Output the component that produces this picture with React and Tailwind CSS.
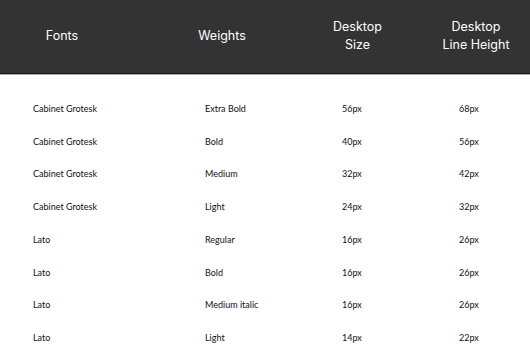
const rows = [
  ['Cabinet Grotesk', 'Extra Bold', '56px', '68px'],
  ['Cabinet Grotesk', 'Bold', '40px', '56px'],
  ['Cabinet Grotesk', 'Medium', '32px', '42px'],
  ['Cabinet Grotesk', 'Light', '24px', '32px'],
  ['Lato', 'Regular', '16px', '26px'],
  ['Lato', 'Bold', '16px', '26px'],
  ['Lato', 'Medium italic', '16px', '26px'],
  ['Lato', 'Light', '14px', '22px'],
];

export default function App() {
  return (
    <div className="h-[363px] w-[530px] overflow-hidden bg-white">
      <div className="flex h-[73px] items-center bg-[#333333] pb-[2px] text-[12.5px] leading-[18px] text-white [font-family:Inter,'Liberation_Sans',sans-serif]">
        <div className="ml-[22px] w-[80px] text-center">Fonts</div>
        <div className="ml-[80px] w-[80px] text-center">Weights</div>
        <div className="ml-[55px] w-[81px] text-center">
          Desktop
          <br />
          Size
        </div>
        <div className="ml-[38px] w-[80px] text-center">
          Desktop
          <br />
          Line Height
        </div>
      </div>
      <div className="h-px bg-[#151515]" />
      <div className="h-px bg-[#ababab]" />

      <div className="pt-[17.5px] text-[9px] text-[#111111] [font-family:Lato,sans-serif]">
        {rows.map((r, i) => (
          <div key={i} className="flex h-[32.7px] items-center">
            <div className="w-[205px] pl-[33px]">{r[0]}</div>
            <div className="w-[137px]">{r[1]}</div>
            <div className="w-[117px]">{r[2]}</div>
            <div>{r[3]}</div>
          </div>
        ))}
      </div>
    </div>
  );
}
